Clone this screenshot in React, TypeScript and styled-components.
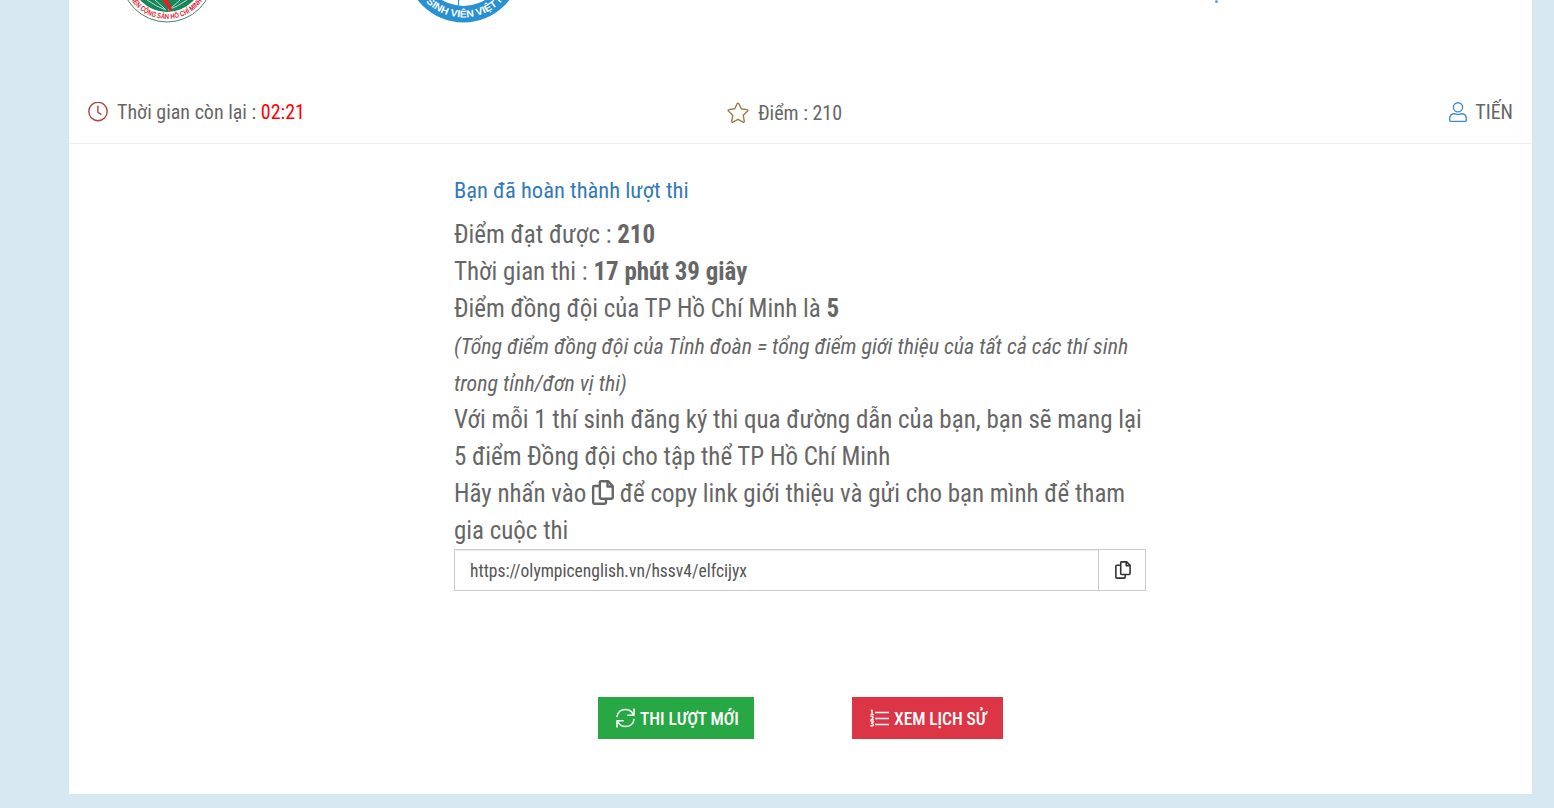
import React from "react";
import styled, { createGlobalStyle } from "styled-components";

const Global = createGlobalStyle`
  * { box-sizing: border-box; }
  body {
    margin: 0;
    background: #d7e8f0;
    color: #666;
    font-family: "Roboto Condensed", Roboto, sans-serif;
    font-stretch: 75%;
  }
`;

const Page = styled.div`
  height: 808px;
  padding: 0 22px 14px 69px;
  overflow: hidden;
`;

const Panel = styled.main`
  height: 794px;
  background: #fff;
  display: flex;
  flex-direction: column;
`;

const Banner = styled.header`
  height: 81px;
  display: flex;
  align-items: flex-start;
  padding-left: 50px;
`;

const YouthLogo = styled.svg`
  width: 96px;
  height: 26px;
  margin-right: 190px;
`;

const StudentLogo = styled.svg`
  width: 120px;
  height: 26px;
`;

const BannerTitle = styled.svg`
  width: 180px;
  height: 6px;
  margin-left: 579px;
`;

const StatusBar = styled.section`
  height: 63px;
  padding: 0 19px;
  border-bottom: 1px solid #eee;
  display: grid;
  grid-template-columns: 1fr auto 1fr;
  align-items: center;
  font-size: 20px;
  line-height: 28px;
`;

const Status = styled.div<{ $align?: string; $shift?: number; $drop?: number; $gap?: number }>`
  display: flex;
  align-items: center;
  gap: ${(p) => p.$gap ?? 9}px;
  justify-self: ${(p) => p.$align ?? "start"};
  margin-right: ${(p) => p.$shift ?? 0}px;
  padding-top: ${(p) => p.$drop ?? 0}px;
  svg { flex: none; }
`;

const Countdown = styled.span`
  color: #f00;
`;

const Result = styled.section`
  width: 692px;
  margin: 31px 0 0 385px;
`;

const Heading = styled.h1`
  margin: 0 0 10px;
  font-size: 22.5px;
  line-height: 31px;
  font-weight: 400;
  color: #337ab7;
`;

const Line = styled.p`
  margin: 0;
  font-size: 24.98px;
  line-height: 37px;
`;

const Note = styled.em`
  font-size: 21.89px;
  line-height: 1;
`;

const LinkGroup = styled.div`
  display: flex;
  height: 42px;
`;

const LinkInput = styled.input`
  flex: 1;
  min-width: 0;
  padding: 2px 15px 0;
  border: 1px solid #ccc;
  border-right: 0;
  border-radius: 0;
  box-shadow: inset 0 1px 1px rgba(0, 0, 0, 0.075);
  outline: none;
  font: inherit;
  font-stretch: 75%;
  font-size: 17.5px;
  color: #555;
`;

const CopyButton = styled.button`
  width: 48px;
  padding: 0 0 0 1px;
  display: grid;
  place-items: center;
  background: #fff;
  border: 1px solid #ccc;
  color: #333;
`;

const Actions = styled.div`
  display: flex;
  gap: 98px;
  margin: 106px 0 0 529px;
`;

const Action = styled.button<{ $color: string; $width: number }>`
  width: ${(p) => p.$width}px;
  height: 42px;
  padding: 2px 0 0 18px;
  border: 0;
  display: flex;
  align-items: center;
  gap: 5px;
  background: ${(p) => p.$color};
  color: #fff;
  font: inherit;
  font-stretch: 75%;
  font-size: 17.5px;
  font-weight: 500;
  letter-spacing: -0.08px;
  white-space: nowrap;
  svg { margin-top: -2px; }
`;

const CopyGlyph = styled.svg`
  fill: none;
  stroke: currentColor;
  stroke-linejoin: round;
  overflow: visible;
`;

const InlineCopy = styled(CopyGlyph)`
  vertical-align: -3px;
`;

function CopyPaths() {
  return (
    <>
      <path d="M9.5 1.2h7.2l5 5v12a1.3 1.3 0 0 1-1.3 1.3H9.5a1.3 1.3 0 0 1-1.3-1.3V2.5a1.3 1.3 0 0 1 1.3-1.3z" />
      <path d="M16.2 1.2v5.5h5.5" />
      <path d="M8.2 6.2H2.5a1.3 1.3 0 0 0-1.3 1.3v16a1.3 1.3 0 0 0 1.3 1.3h10.8a1.3 1.3 0 0 0 1.3-1.3v-4" />
    </>
  );
}

export default function App() {
  return (
    <>
      <Global />
      <Page>
        <Panel>
          <Banner>
            <YouthLogo viewBox="0 0 96 26">
              <circle cx="48" cy="-24" r="46" fill="#fff" stroke="#4b8068" strokeWidth="1" />
              <circle cx="48" cy="-24" r="36" fill="#16865b" />
              <path d="M28 0 Q38 7 47 10 M68 0 Q58 7 49 10 M36 0 L46 9 M61 0 L51 9" fill="none" stroke="#b9dbc9" strokeWidth="1" />
              <path d="M43 0h6l5 11h-3z" fill="#e6202a" />
              <defs><path id="youth-arc" d="M5 -24 A43 43 0 0 0 91 -24" /></defs>
              <text fill="#e32636" fontSize="7.4" fontWeight="700" fontStretch="100%" fontFamily="Liberation Sans, sans-serif" textAnchor="middle">
                <textPath href="#youth-arc" startOffset="50%" textLength="82" lengthAdjust="spacingAndGlyphs">IÊN CỘNG SẢN HỒ CHÍ MINH</textPath>
              </text>
            </YouthLogo>
            <StudentLogo viewBox="0 0 120 26">
              <circle cx="58.5" cy="-35.5" r="58" fill="#2990d2" />
              <circle cx="58.5" cy="-35.5" r="41.5" fill="#fff" />
              <path d="M53.5 0v5.5" stroke="#2990d2" strokeWidth="1.2" />
              <defs><path id="student-arc" d="M5.5 -35.5 A53 53 0 0 0 111.5 -35.5" /></defs>
              <text fill="#fff" fontSize="10" fontWeight="700" fontStretch="100%" fontFamily="Liberation Sans, sans-serif" textAnchor="middle">
                <textPath href="#student-arc" startOffset="50%" textLength="95" lengthAdjust="spacingAndGlyphs">I SINH VIÊN VIỆT N</textPath>
              </text>
            </StudentLogo>
            <BannerTitle viewBox="0 0 180 6">
              <circle cx="112.5" cy="1.5" r="1.5" fill="#64a5d6" />
            </BannerTitle>
          </Banner>

          <StatusBar>
            <Status>
              <svg width="20" height="20" viewBox="0 0 20 20" fill="none" stroke="#b04444" strokeWidth="1.4" strokeLinecap="round">
                <circle cx="10" cy="9.5" r="9.2" />
                <path d="M9.9 4.2v6l3 2.2" />
              </svg>
              <span>Thời gian còn lại : <Countdown>02:21</Countdown></span>
            </Status>
            <Status $align="center" $shift={32} $drop={2}>
              <svg width="22" height="22" viewBox="0 0 22 22" fill="none" stroke="#a27a43" strokeWidth="1.4" strokeLinejoin="round">
                <path d="M10.1 1.8a1 1 0 0 1 1.8 0l2.3 5 5.9.8a.8.8 0 0 1 .5 1.4l-4.4 4.2 1.1 6a.8.8 0 0 1-1.2.9L11 17.3l-5.1 2.8a.8.8 0 0 1-1.2-.9l1.1-6L1.4 9a.8.8 0 0 1 .5-1.4l5.9-.8z" />
              </svg>
              <span>Điểm : 210</span>
            </Status>
            <Status $align="end" $gap={8}>
              <svg width="18" height="20" viewBox="0 0 18 20" fill="none" stroke="#428bca" strokeWidth="1.4">
                <circle cx="9" cy="5.3" r="4.6" />
                <path d="M5.5 11.8c1.6 0 1.9.7 3.5.7s1.9-.7 3.5-.7c2.9 0 4.8 2 4.8 5v1.4a1.2 1.2 0 0 1-1.2 1.2H1.9a1.2 1.2 0 0 1-1.2-1.2v-1.4c0-3 1.9-5 4.8-5z" />
              </svg>
              <span>TIẾN</span>
            </Status>
          </StatusBar>

          <Result>
            <Heading>Bạn đã hoàn thành lượt thi</Heading>
            <Line>Điểm đạt được : <b>210</b></Line>
            <Line>Thời gian thi : <b>17 phút 39 giây</b></Line>
            <Line>Điểm đồng đội của TP Hồ Chí Minh là <b>5</b></Line>
            <Line><Note>(Tổng điểm đồng đội của Tỉnh đoàn = tổng điểm giới thiệu của tất cả các thí sinh trong tỉnh/đơn vị thi)</Note></Line>
            <Line>Với mỗi 1 thí sinh đăng ký thi qua đường dẫn của bạn, bạn sẽ mang lại 5 điểm Đồng đội cho tập thể TP Hồ Chí Minh</Line>
            <Line>
              Hãy nhấn vào{" "}
              <InlineCopy width="22" height="25" viewBox="0 0 23 26" strokeWidth="2.5"><CopyPaths /></InlineCopy>{" "}
              để copy link giới thiệu và gửi cho bạn mình để tham gia cuộc thi
            </Line>
            <LinkGroup>
              <LinkInput readOnly value="https://olympicenglish.vn/hssv4/elfcijyx" />
              <CopyButton aria-label="Copy">
                <CopyGlyph width="16" height="18" viewBox="0 0 23 26" strokeWidth="2.3"><CopyPaths /></CopyGlyph>
              </CopyButton>
            </LinkGroup>
          </Result>

          <Actions>
            <Action $color="#28a745" $width={156}>
              <svg width="19" height="20" viewBox="0 0 19 20" fill="none" stroke="currentColor" strokeWidth="1.5" strokeLinecap="round" strokeLinejoin="round">
                <path d="M1 8.5C1.6 4.3 5 1.4 9.4 1.4c3.3 0 6.2 1.8 7.7 4.7M18 1v6.2h-6.2M18 11.5c-.6 4.2-4 7.1-8.4 7.1-3.3 0-6.2-1.8-7.7-4.7M1 19v-6.2h6.2" />
              </svg>
              THI LƯỢT MỚI
            </Action>
            <Action $color="#dc3545" $width={151}>
              <svg width="19" height="18" viewBox="0 0 19 18" fill="none" stroke="currentColor" strokeWidth="1.3">
                <path d="M5 3.5h14M5 9.5h14M5 15.5h14" />
                <path d="M.8 1.5h1.3v4M.5 5.5h3.3M.5 7.3h2.4v1.6L.9 11h2.8M.6 12.9h2.6l-1.2 1.6c1.9 0 1.7 2.5-.1 2.5-.7 0-1.1-.2-1.4-.5" />
              </svg>
              XEM LỊCH SỬ
            </Action>
          </Actions>
        </Panel>
      </Page>
    </>
  );
}
